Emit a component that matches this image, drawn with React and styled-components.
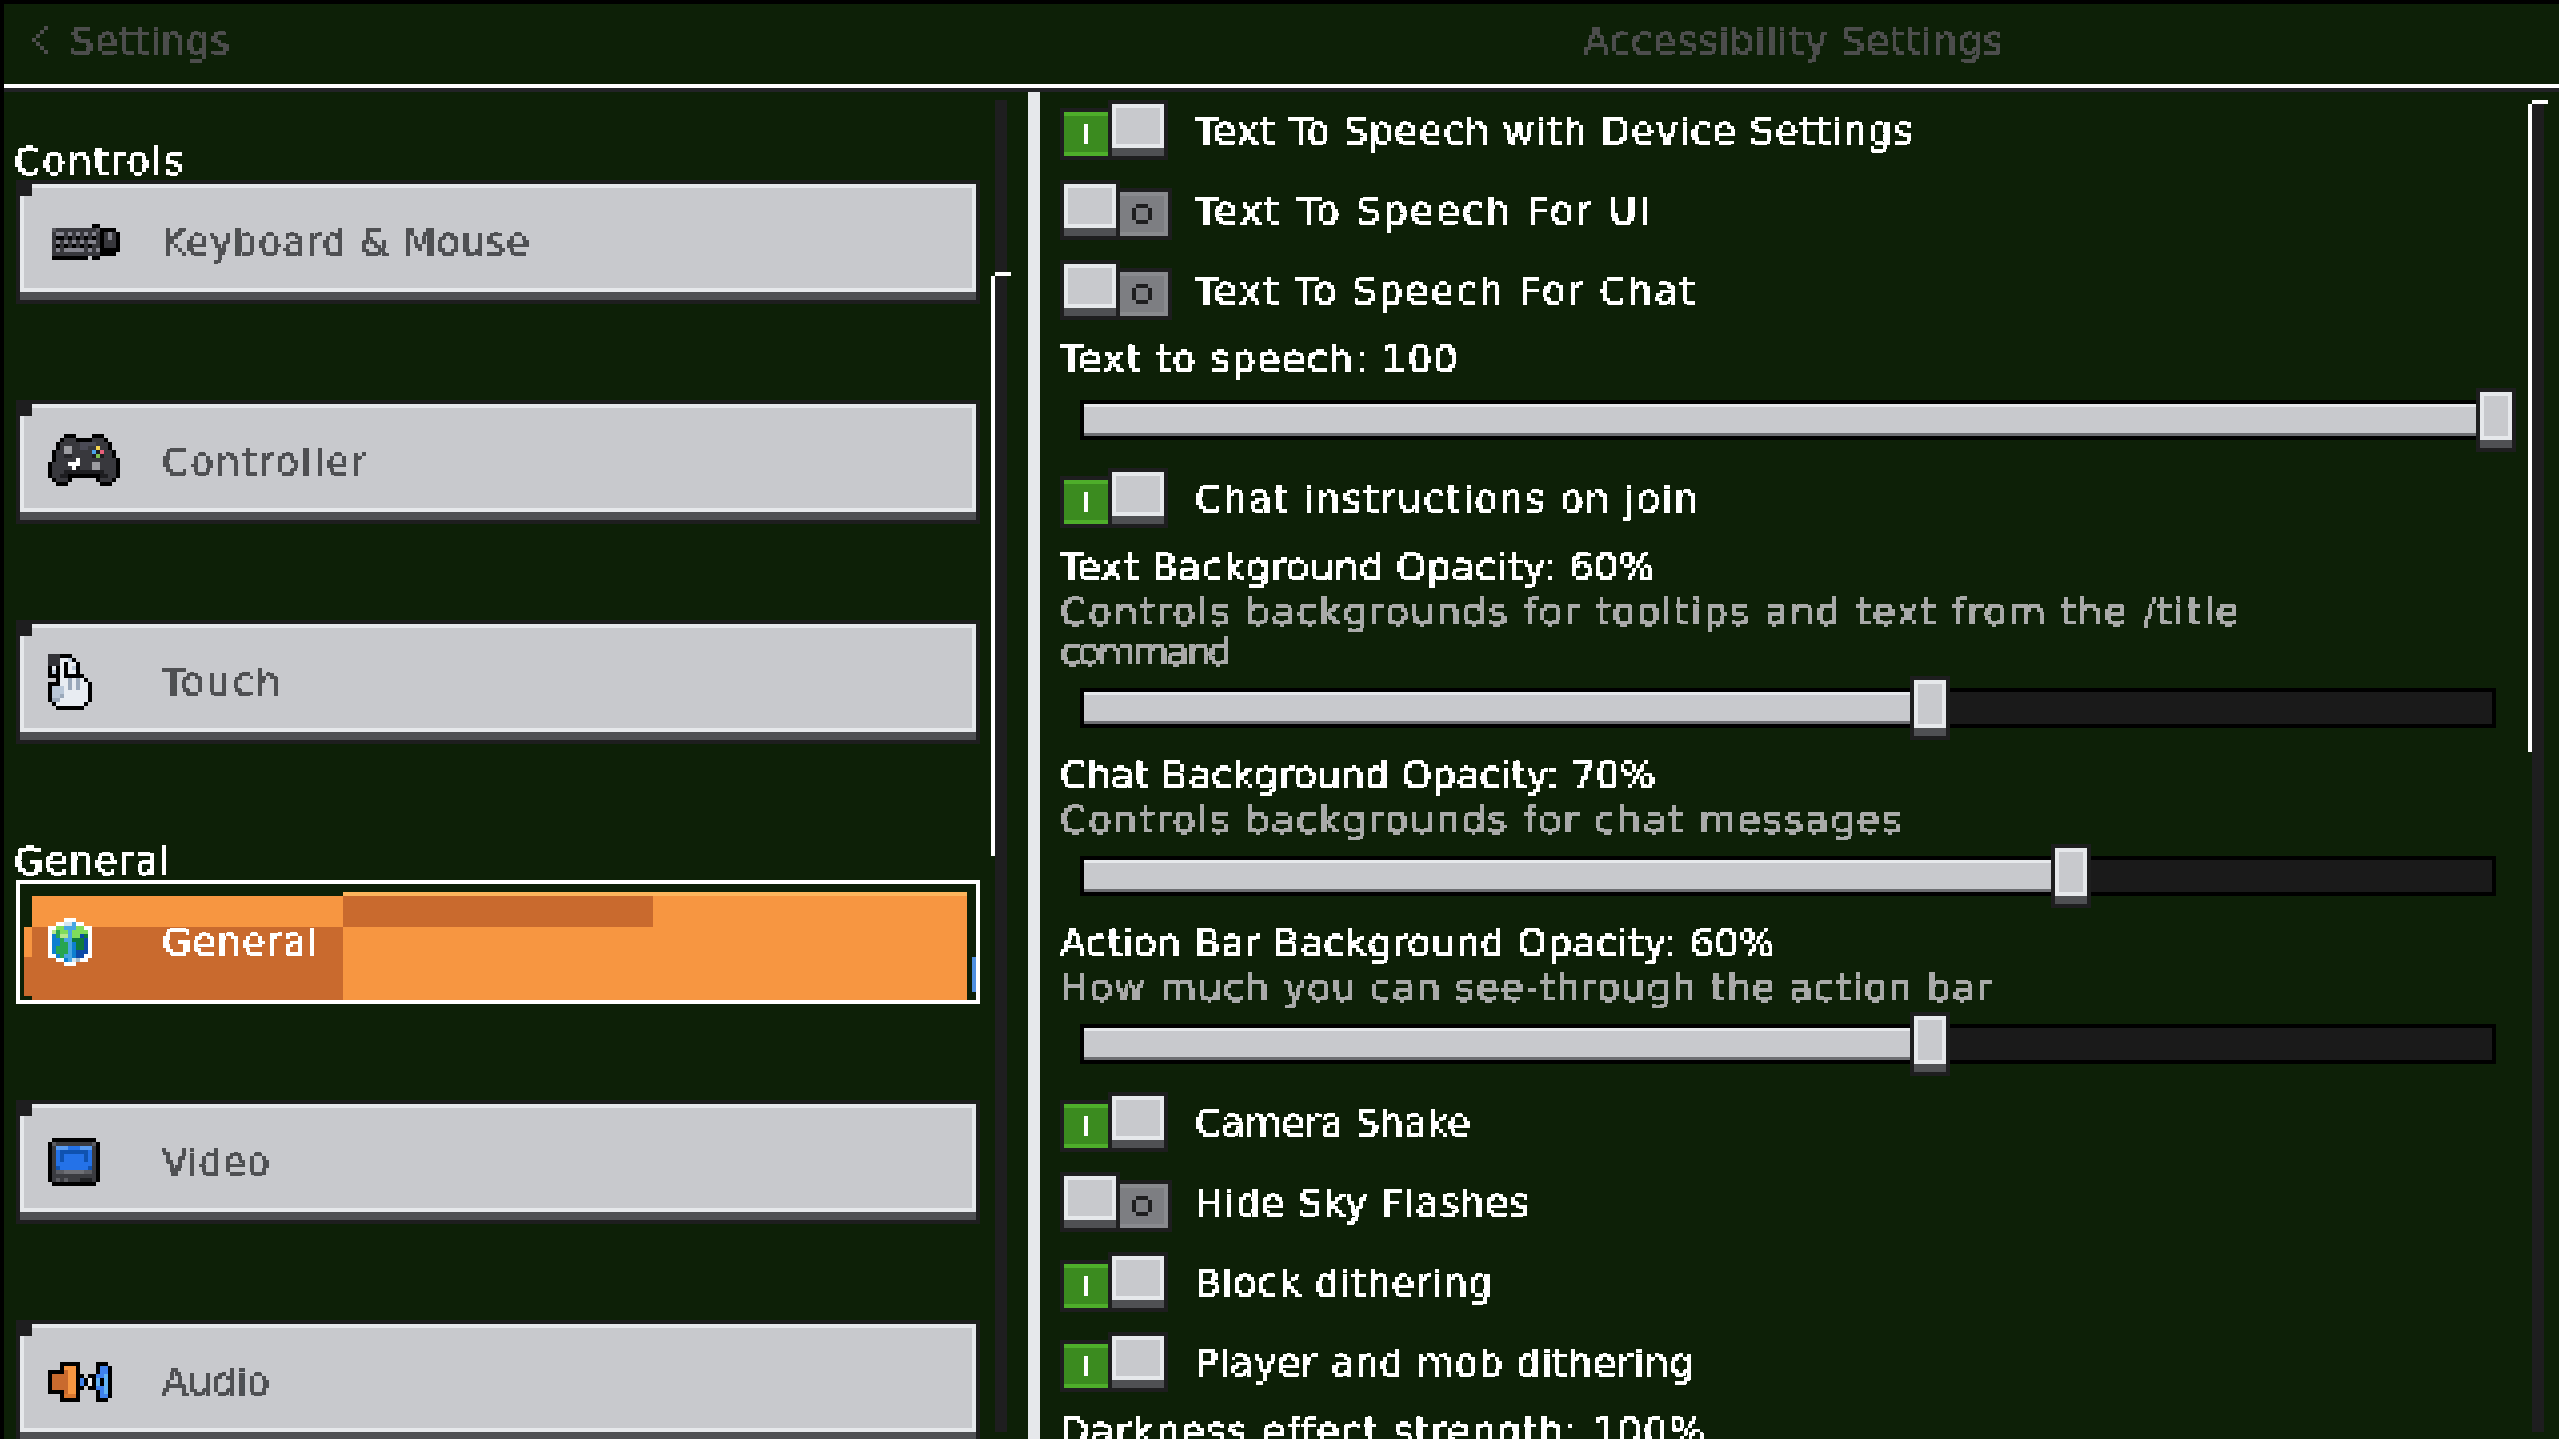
import React from 'react';
import styled, { createGlobalStyle, css } from 'styled-components';

const GlobalStyle = createGlobalStyle`
  html, body {
    margin: 0;
    padding: 0;
    background: #0d2007;
  }
`

// the $track prop fits each string to the width it has in the game's pixel font
const pixelText = css`
  font-family: "DejaVu Sans", sans-serif;
  font-size: 38px;
  letter-spacing: ${p => p.$track ?? 1}px;
  white-space: nowrap;
  filter: url(#pixelate);
`

const buttonBevel = css`
  background: #c8c9cd;
  border: 4px solid #1e1e1f;
  box-shadow:
    inset 0 -8px 0 #4f5053,
    inset 0 -12px 0 #e6e8eb,
    inset 0 4px 0 #e6e8eb,
    inset 4px 0 0 #e6e8eb,
    inset -4px 0 0 #e6e8eb;
`

const Page = styled.div`
  display: flex;
  flex-direction: column;
  height: 100vh;
  box-sizing: border-box;
  overflow: hidden;
  border-top: 4px solid #000;
  border-left: 4px solid #000;
  background: #0d2007;
`

const Header = styled.div`
  display: flex;
  align-items: center;
  flex: none;
  height: 84px;
  box-sizing: border-box;
  padding-bottom: 8px;
  border-bottom: 4px solid #fff;
  box-shadow: 0 4px 0 #222326;
  position: relative;
  z-index: 1;
`

const BackLink = styled.div`
  display: flex;
  align-items: center;
  gap: 22px;
  width: 1036px;
  box-sizing: border-box;
  padding-left: 28px;
`

const HeaderText = styled.div`
  ${pixelText}
  margin-top: 2px;
  color: #4c4d4c;
`

const HeaderTitle = styled(HeaderText)`
  flex: 1;
  padding-right: 12px;
  text-align: center;
`

const Body = styled.div`
  display: flex;
  flex: 1;
  min-height: 0;
  margin-top: 4px;
`

const LeftPane = styled.div`
  display: flex;
  flex: none;
  width: 1024px;
`

const CategoryList = styled.div`
  display: flex;
  flex-direction: column;
  width: 976px;
  box-sizing: border-box;
  padding: 48px 0 0 12px;
`

const SectionTitle = styled.div`
  ${pixelText}
  height: 40px;
  margin-left: -2px;
  margin-top: ${p => p.$gap || 0}px;
  line-height: 43px;
  color: #fff;
`

const CategoryRow = styled.div`
  ${buttonBevel}
  display: flex;
  align-items: center;
  flex: none;
  position: relative;
  width: 964px;
  height: 124px;
  box-sizing: border-box;
  margin-bottom: ${p => p.$last ? 0 : 96}px;
  &::before {
    content: '';
    position: absolute;
    top: 0;
    left: 0;
    width: 12px;
    height: 12px;
    background: #1e1e1f;
  }
`

const SelectedRow = styled(CategoryRow)`
  background: #0d2007;
  border-color: #fff;
  box-shadow: none;
  &::before {
    display: none;
  }
`

const OrangeFace = styled.div`
  position: absolute;
  top: 12px;
  left: 12px;
  right: 9px;
  bottom: 0;
  background: #f79641;
`

const GlitchLower = styled.div`
  position: absolute;
  top: 43px;
  left: 4px;
  width: 319px;
  bottom: 0;
  background: #c96a2e;
`

const GlitchLeftStrip = styled.div`
  position: absolute;
  top: 43px;
  left: 4px;
  width: 8px;
  height: 30px;
  background: #f79641;
`

const GlitchNotch = styled.div`
  position: absolute;
  bottom: 0;
  left: 4px;
  width: 8px;
  height: 4px;
  background: #0d2007;
`

const GlitchUpper = styled.div`
  position: absolute;
  top: 12px;
  left: 323px;
  width: 310px;
  height: 31px;
  background: #c96a2e;
`

const GlitchTopEdge = styled.div`
  position: absolute;
  top: 8px;
  left: 323px;
  right: 9px;
  height: 4px;
  background: #fdb55c;
`

const GlitchBlue = styled.div`
  position: absolute;
  top: 73px;
  right: 0;
  width: 4px;
  height: 35px;
  background: #4e8fe0;
`

const IconSlot = styled.div`
  display: flex;
  align-items: center;
  flex: none;
  position: relative;
  width: 142px;
  box-sizing: border-box;
  padding-left: 28px;
`

const CategoryLabel = styled.div`
  ${pixelText}
  position: relative;
  margin-bottom: 1px;
  color: ${p => p.$selected ? '#fff' : '#4f5053'};
`

const Rail = styled.div`
  flex: none;
  width: 20px;
  margin-left: ${p => p.$offset || 0}px;
`

const RailTrack = styled.div`
  position: relative;
  width: 12px;
  height: ${p => p.$height}px;
  margin: ${p => p.$top}px 0 0 4px;
  background: #1e1e1f;
`

const RailThumb = styled.div`
  position: absolute;
  top: ${p => p.$top}px;
  left: -4px;
  width: 4px;
  height: ${p => p.$height}px;
  background: #fff;
  &::after {
    content: '';
    position: absolute;
    top: -4px;
    left: 4px;
    width: 16px;
    height: 4px;
    background: #fff;
  }
`

const Divider = styled.div`
  flex: none;
  width: 12px;
  background: #e6e8eb;
`

const RightPane = styled.div`
  display: flex;
  flex: 1;
  min-width: 0;
`

const SettingsColumn = styled.div`
  display: flex;
  flex-direction: column;
  width: 1488px;
  flex: none;
  box-sizing: border-box;
  padding: 8px 0 0 20px;
`

const ToggleRow = styled.div`
  display: flex;
  align-items: center;
  flex: none;
  height: 60px;
  margin-bottom: 20px;
`

const ToggleBox = styled.div`
  display: flex;
  align-items: flex-end;
  flex: none;
  width: 135px;
  height: 60px;
`

const ToggleKnob = styled.div`
  ${buttonBevel}
  flex: none;
  width: 60px;
  height: 60px;
  box-sizing: border-box;
`

const ToggleOn = styled.div`
  display: flex;
  align-items: center;
  justify-content: center;
  flex: none;
  width: 48px;
  height: 52px;
  box-sizing: border-box;
  border: 4px solid #1e1e1f;
  border-right: 0;
  background: #3b8b1f;
  box-shadow: inset 0 4px 0 #4eae2a, inset 0 -4px 0 #4eae2a;
`

const ToggleOff = styled.div`
  display: flex;
  align-items: center;
  justify-content: center;
  flex: none;
  width: 52px;
  height: 52px;
  box-sizing: border-box;
  padding-right: 4px;
  border: 4px solid #1e1e1f;
  border-left: 0;
  background: #7d7e82;
  box-shadow: inset 0 4px 0 #898a8e, inset -4px 0 0 #898a8e, inset 0 -4px 0 #898a8e;
`

const ToggleLabel = styled.div`
  ${pixelText}
  margin-top: 2px;
  color: #fff;
`

const SliderLabel = styled.div`
  ${pixelText}
  flex: none;
  height: 36px;
  line-height: 39px;
  color: #fff;
`

const SliderHint = styled.div`
  flex: none;
  margin-top: 8px;
`

const HintLine = styled.div`
  ${pixelText}
  line-height: 40px;
  color: #a9aaa9;
`

const SliderRow = styled.div`
  display: flex;
  align-items: center;
  flex: none;
  position: relative;
  width: 1416px;
  height: 64px;
  margin: ${p => p.$hinted ? 4 : 12}px 0 16px 20px;
`

const SliderTrack = styled.div`
  flex: 1;
  height: 40px;
  box-sizing: border-box;
  border: 4px solid #000;
  background: #1a1a1a;
`

const SliderFill = styled.div`
  height: 100%;
  max-width: 100%;
  background: #c8c9cd;
  box-shadow: inset 0 3px 0 #e6e8eb, inset 0 -3px 0 #6e6f73;
`

const SliderKnob = styled.div`
  ${buttonBevel}
  position: absolute;
  top: 0;
  width: 40px;
  height: 64px;
  box-sizing: border-box;
`

const HiddenDefs = styled.svg`
  position: absolute;
  width: 0;
  height: 0;
`

const IconSvg = styled.svg`
  display: block;
  flex: none;
`

const PALETTE = {
  k: '#000000',
  // keyboard and controller
  d: '#38383d', g: '#5a5a60', l: '#85858f', e: '#26262a', m: '#4a4a55', L: '#9d9da2',
  Y: '#f5d34f', B: '#4aa3e8', P: '#e8607a', N: '#7cc04e', W: '#ffffff', K: '#1d1d20',
  // hand
  D: '#333338', w: '#e8ecf2', b: '#b9c7d8', s: '#9aa8ba',
}

const GLOBE = {
  W: '#ffffff', c: '#d5e5ee', a: '#48a6e2', g: '#7fdc5a', G: '#0f7a3a', m: '#27a550',
  b: '#0d7fd0', n: '#0d4aa8', l: '#b5e88a', s: '#a6bccb',
}

const SCREEN = {
  k: '#000000', d: '#3a3b40', g: '#5b5c62', l: '#5a9cf2', b: '#2472e8', n: '#0f52b0',
  m: '#6e6f75', e: '#1f2023',
}

const SPEAKER = {
  k: '#000000', o: '#f79641', D: '#c96a2e', E: '#d9772f', b: '#3f82ee', L: '#62b4f5', w: '#e8eaee',
}

const KEYBOARD_ICON = [
  '...........kk.....',
  '.gddddddddddgkkkk.',
  '.dlldldldldldkdldk',
  '.dkkdkdkdkdkdkdldk',
  '.dldldldldlldkdddk',
  '.dkdkdkdkdkddkdddk',
  '.dldllllldldlkkkkk',
  '.ddddddddddddkkkk.',
  '.kkkkkkkkk.kk.....',
]

const CONTROLLER_ICON = [
  '....kkk....kkk....',
  '...kdddkkkkdddk...',
  '..kdddddmmmmdddk..',
  '..kdLLddmmddYddk..',
  '.kddLLdddddBKPddk.',
  '.kddeedddddKNKddk.',
  '.kdddddWdddddddddk',
  'kddddWWWdddLLddddk',
  'kdddddWKdddLLddddk',
  'kdddKKKKKKKKKKdddk',
  'kddKKkkkkkkkkKKddk',
  '.kdddk......kdddk.',
  '..kkk........kkk..',
  '..................',
]

const TOUCH_ICON = [
  'DDDkkk.....',
  'DDDwwbk....',
  'DDDwkwwk...',
  'kwkwkwbk...',
  'kbkwkwwk...',
  'kkkwkkkkk..',
  '..kwwswswk.',
  'kkkwwswswwk',
  'kbbbwswswwk',
  'kbbbwwwwwwk',
  'kbbswwwwwwk',
  'ksswwwwwwwk',
  '.kwwwwwwwk.',
  '..kkkkkkk..',
]

const GLOBE_ICON = [
  '....WWW....',
  '..WWccaWW..',
  'WWggaaaggWW',
  'WlmggaggggW',
  'WbmllaggnGW',
  'WbbmaaGGGnW',
  'WbbmmabGGnW',
  'WbmmmabGGnW',
  'WbmmmabnnnW',
  'WWbmaabnnWW',
  '..WWbacsWW.',
  '....WWW....',
]

const VIDEO_ICON = [
  '.kkkkkkkkkkk.',
  'kgdddddddddgk',
  'kdlllbbbllldk',
  'kdbnnnnnnnbdk',
  'kdbnbbbbbnbdk',
  'kdbnbbbbbnbdk',
  'kdbbbbbbbbbdk',
  'kdnbbbbbbbndk',
  'kdggmmmmmggdk',
  'kdddddddddddk',
  'kdgdgdddeeedk',
  '.kkkkkkkkkkk.',
]

const AUDIO_ICON = [
  '...kkkkk....kkk.',
  '...koook....kbbk',
  'kkkkDook....kbbk',
  'kDDDDookk.kkbbLk',
  'kDDDDookbkwkLkLk',
  'kDDDDookbkwkLkLk',
  'kDDDDookk.kkbbLk',
  'kkkkDook....kbLk',
  '...kEEEk....kbbk',
  '...kkkkk....kkk.',
]

const CHEVRON_ICON = ['...k', '..k.', '.k..', 'k...', '.k..', '..k.', '...k']
const ON_ICON = ['W', 'W', 'W', 'W', 'W']
const OFF_ICON = ['.KKK.', 'K...K', 'K...K', 'K...K', '.KKK.']

const PixelIcon = ({ map, colors = PALETTE, tint }) => {
  const columns = map[0].length
  return (
    <IconSvg
      width={columns * 4}
      height={map.length * 4}
      viewBox={`0 0 ${columns} ${map.length}`}
      shapeRendering="crispEdges"
    >
      {map.map((line, y) =>
        line.split('').map((cell, x) =>
          cell === '.' ? null : (
            <rect key={`${x}-${y}`} x={x} y={y} width="1" height="1" fill={tint || colors[cell]} />
          )
        )
      )}
    </IconSvg>
  )
}

const Toggle = ({ on, label, track }) => (
  <ToggleRow>
    <ToggleBox>
      {on ? (
        <>
          <ToggleOn><PixelIcon map={ON_ICON} /></ToggleOn>
          <ToggleKnob />
        </>
      ) : (
        <>
          <ToggleKnob />
          <ToggleOff><PixelIcon map={OFF_ICON} tint="#1e1e1f" /></ToggleOff>
        </>
      )}
    </ToggleBox>
    <ToggleLabel $track={track}>{label}</ToggleLabel>
  </ToggleRow>
)

const Slider = ({ value, hinted }) => {
  const travel = value * 14.12
  return (
    <SliderRow $hinted={hinted}>
      <SliderTrack>
        <SliderFill style={{ width: travel }} />
      </SliderTrack>
      <SliderKnob style={{ left: value === 100 ? travel - 16 : travel - 17 }} />
    </SliderRow>
  )
}

const Category = ({ map, colors, label, track, last }) => (
  <CategoryRow $last={last}>
    <IconSlot><PixelIcon map={map} colors={colors} /></IconSlot>
    <CategoryLabel $track={track}>{label}</CategoryLabel>
  </CategoryRow>
)

const App = () => (
  <Page>
    <GlobalStyle />
    <HiddenDefs aria-hidden="true">
      <filter id="pixelate" x="-2%" y="-20%" width="104%" height="140%" colorInterpolationFilters="sRGB">
        <feFlood x="1" y="1" width="2" height="2" floodColor="#000" />
        <feComposite width="4" height="4" />
        <feTile result="grid" />
        <feComposite in="SourceGraphic" in2="grid" operator="in" />
        <feMorphology operator="dilate" radius="1" />
        <feComponentTransfer>
          <feFuncA type="discrete" tableValues="0 1 1 1" />
        </feComponentTransfer>
      </filter>
    </HiddenDefs>

    <Header>
      <BackLink>
        <PixelIcon map={CHEVRON_ICON} tint="#4c4d4c" />
        <HeaderText $track={0.6}>Settings</HeaderText>
      </BackLink>
      <HeaderTitle $track={0.85}>Accessibility Settings</HeaderTitle>
    </Header>

    <Body>
      <LeftPane>
        <CategoryList>
          <SectionTitle $track={1.8}>Controls</SectionTitle>
          <Category map={KEYBOARD_ICON} label="Keyboard & Mouse" track={0.8} />
          <Category map={CONTROLLER_ICON} label="Controller" track={2} />
          <Category map={TOUCH_ICON} label="Touch" track={2.3} last />
          <SectionTitle $gap={96}>General</SectionTitle>
          <SelectedRow>
            <OrangeFace />
            <GlitchLower />
            <GlitchLeftStrip />
            <GlitchNotch />
            <GlitchUpper />
            <GlitchTopEdge />
            <GlitchBlue />
            <IconSlot><PixelIcon map={GLOBE_ICON} colors={GLOBE} /></IconSlot>
            <CategoryLabel $selected>General</CategoryLabel>
          </SelectedRow>
          <Category map={VIDEO_ICON} colors={SCREEN} label="Video" track={0.4} />
          <Category map={AUDIO_ICON} colors={SPEAKER} label="Audio" track={0} last />
        </CategoryList>
        <Rail $offset={11}>
          <RailTrack $top={8} $height={1332}>
            <RailThumb $top={176} $height={580} />
          </RailTrack>
        </Rail>
      </LeftPane>

      <Divider />

      <RightPane>
        <SettingsColumn>
          <Toggle on label="Text To Speech with Device Settings" />
          <Toggle label="Text To Speech For UI" track={2.6} />
          <Toggle label="Text To Speech For Chat" track={2.1} />
          <SliderLabel $track={1.4}>Text to speech: 100</SliderLabel>
          <Slider value={100} />
          <Toggle on label="Chat instructions on join" track={1.65} />
          <SliderLabel $track={0.53}>Text Background Opacity: 60%</SliderLabel>
          <SliderHint>
            <HintLine $track={1.8}>Controls backgrounds for tooltips and text from the /title</HintLine>
            <HintLine $track={-3}>command</HintLine>
          </SliderHint>
          <Slider value={60} hinted />
          <SliderLabel $track={0.13}>Chat Background Opacity: 70%</SliderLabel>
          <SliderHint>
            <HintLine $track={1.77}>Controls backgrounds for chat messages</HintLine>
          </SliderHint>
          <Slider value={70} hinted />
          <SliderLabel $track={0.47}>Action Bar Background Opacity: 60%</SliderLabel>
          <SliderHint>
            <HintLine $track={1.15}>How much you can see-through the action bar</HintLine>
          </SliderHint>
          <Slider value={60} hinted />
          <Toggle on label="Camera Shake" track={-0.1} />
          <Toggle label="Hide Sky Flashes" track={0.9} />
          <Toggle on label="Block dithering" track={0.8} />
          <Toggle on label="Player and mob dithering" track={0.73} />
          <SliderLabel $track={1.4}>Darkness effect strength: 100%</SliderLabel>
        </SettingsColumn>
        <Rail>
          <RailTrack $top={12} $height={1328}>
            <RailThumb $top={0} $height={648} />
          </RailTrack>
        </Rail>
      </RightPane>
    </Body>
  </Page>
)

export default App
